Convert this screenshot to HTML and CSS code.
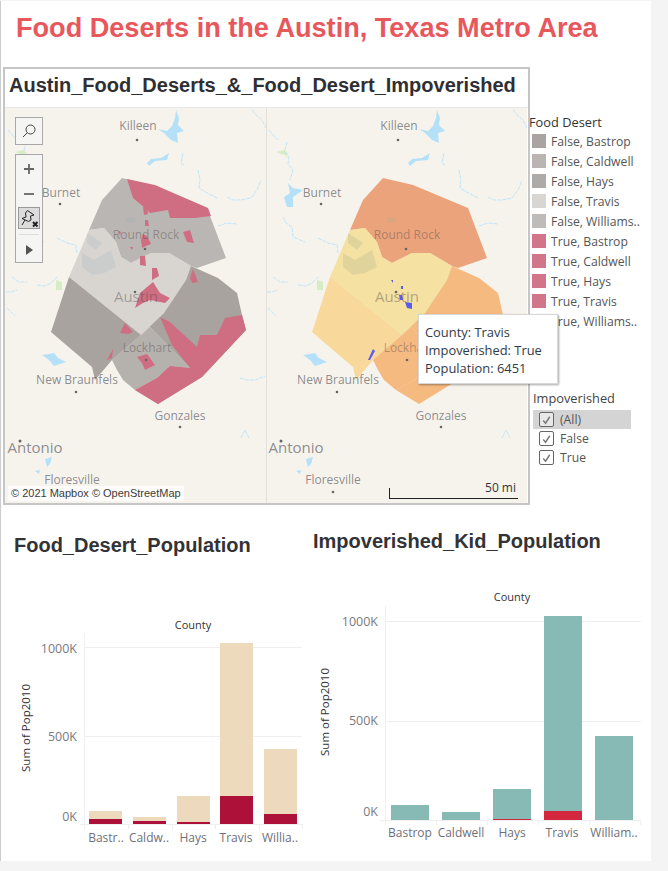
FILE: index.html
```html
<!DOCTYPE html>
<html lang="en">
<head>
<meta charset="utf-8">
<title>Food Deserts in the Austin, Texas Metro Area</title>
<link rel="stylesheet" href="styles.css">
</head>
<body>
<div class="dash">
  <h1 class="title">Food Deserts in the Austin, Texas Metro Area</h1>
  <div class="main">
    <section class="card">
      <h2 class="card-title">Austin_Food_Deserts_&amp;_Food_Desert_Impoverished</h2>
      <div class="maps">
        <div class="map">
          <svg class="map-svg" viewBox="0 0 261 395" width="261" height="395">
            <defs>
              <g id="water">
                <g class="lake">
                  <polygon points="22,75 27,80 37,82 27,89 27,99 21,99 18,89 24,85"/>
                  <polygon points="171,2 174,10 173,17 179,23 172,25 173,35 166,32 159,25 153,21 162,23 167,18 170,10"/>
                  <polygon points="142,55 146,51 156,50 164,45 162,52 150,53 144,58"/>
                  <polygon points="37,247 44,246 49,245 53,250 61,254 55,256 49,258 44,252"/>
                  <polygon points="40,351 47,349 45,356 42,359"/>
                  <polygon points="30,363 35,362 34,366"/>
                </g>
                <g class="river">
                  <polyline points="21,34 19,42 23,49 22,56 27,62 24,72"/>
                  <polyline points="17,109 20,115 26,119 27,129 39,134"/>
                  <polyline points="52,130 62,135 71,137 72,145"/>
                  <polyline points="222,89 228,92 236,92 246,90 252,82 256,72"/>
                  <polyline points="247,2 252,8 257,12 261,20"/>
                  <polyline points="7,169 14,174 22,174"/>
                  <polyline points="32,177 40,178 46,175 52,169"/>
                  <polyline points="1,184 6,184 12,182"/>
                  <polyline points="193,62 195,72 194,80 204,86 212,90"/>
                  <polyline points="178,45 176,55 180,58"/>
                  <polyline points="213,118 222,115 232,116"/>
                  <polyline points="235,270 242,272 250,272 260,268"/>
                  <polyline points="3,22 8,28 12,32"/>
                  <polyline points="236,330 240,322 244,330"/>
                  <polyline points="2,200 10,208"/>
                </g>
                <g class="park">
                  <polygon points="10,44 19,42 22,50 19,47"/>
                  <polygon points="51,172 57,174 57,182 51,182"/>
                </g>
              </g>
              <g id="labels" class="place">
                <text x="133" y="22">Killeen</text>
                <text x="56" y="89">Burnet</text>
                <text class="faded" x="141" y="131">Round Rock</text>
                <text class="big faded" x="131" y="194">Austin</text>
                <text class="faded" x="142" y="244">Lockhart</text>
                <text x="72" y="276">New Braunfels</text>
                <text x="175" y="312">Gonzales</text>
                <text class="big" x="30" y="345">Antonio</text>
                <text x="67" y="376">Floresville</text>
                <circle cx="132" cy="32" r="1.3"/><circle cx="55" cy="96" r="1.3"/>
                <circle cx="140" cy="141" r="1.3"/><circle cx="130" cy="184" r="1.3"/>
                <circle cx="141" cy="252" r="1.3"/><circle cx="71" cy="284" r="1.3"/>
                <circle cx="175" cy="319" r="1.3"/><circle cx="15" cy="333" r="1.5"/>
                <circle cx="67" cy="384" r="1.3"/>
              </g>
              <g id="shade">
                <polygon points="82,125 97,135 91,142 82,135"/>
                <polygon points="77,145 89,152 106,142 111,159 99,165 87,167 77,159"/>
                <polygon points="120,110 128,109 132,114 123,115"/>
              </g>
              <polygon id="wil" points="117,70 147,77 202,100 221,150 192,160 186,158 164,145 146,145 126,155 116,149 111,134 99,120 84,122 97,92"/>
              <polygon id="tra" points="84,122 99,120 111,134 116,149 126,155 146,145 164,145 186,158 181,172 159,205 136,227 64,169"/>
              <polygon id="hay" points="64,169 136,227 107,252 90,272 87,259 46,224"/>
              <polygon id="bas" points="186,158 213,170 232,185 237,207 241,222 197,269 153,296 130,282 152,270 165,258 185,260 145,219 136,227 159,205 181,172"/>
              <polygon id="cal" points="136,227 145,219 185,260 165,258 152,270 130,282 118,272 112,262 107,252"/>
            </defs>
            <use href="#water"/>
            <g class="county">
              <use href="#wil" class="g-wil"/>
              <use href="#tra" class="g-tra"/>
              <use href="#hay" class="g-hay"/>
              <use href="#bas" class="g-bas"/>
              <use href="#cal" class="g-cal"/>
            </g>
            <use href="#shade" class="shade-grey"/>
            <g class="desert">
              <polygon points="122,71 150,77 203,100 206,108 190,110 165,110 163,102 145,105 140,100 128,90"/>
              <polygon points="178,124 185,122 189,135 182,134"/>
              <polygon points="138,99 142,100 143,106 139,107"/>
              <polygon points="140,112 143,112 144,118 140,118"/>
              <polygon points="114,123 116,124 115,128"/>
              <polygon points="138,126 142,128 146,136 141,138 137,140 136,132"/>
              <polygon points="125,139 128,139 127,142"/>
              <polygon points="135,148 140,148 141,158 135,157"/>
              <polygon points="147,160 152,160 154,168 147,172"/>
              <polygon points="130,200 135,185 148,174 155,185 165,190 160,195 145,192 138,195"/>
              <polygon points="185,170 188,161 193,174 187,175"/>
              <polygon points="115,225 120,215 128,224 123,226"/>
              <polygon points="102,252 108,241 107,250"/>
              <polygon points="132,249 142,246 150,257 140,262 137,255"/>
              <polygon points="237,207 241,222 197,269 153,296 130,282 152,270 165,258 185,260 167,237 155,209 165,214 192,239 195,227 212,227 220,210"/>
            </g>
            <use href="#labels"/>
          </svg>
          <div class="attribution">© 2021 Mapbox © OpenStreetMap</div>
        </div>
        <div class="map map-right">
          <svg class="map-svg" viewBox="0 0 261 395" width="261" height="395">
            <use href="#water"/>
            <g class="county">
              <use href="#wil" class="o-wil"/>
              <use href="#tra" class="o-tra"/>
              <use href="#hay" class="o-hay"/>
              <use href="#bas" class="o-bas"/>
              <use href="#cal" class="o-cal"/>
            </g>
            <use href="#shade" class="shade-warm"/>
            <g class="impoverished">
              <polygon points="139,194 146,195 146,201 141,200"/>
              <polygon points="133,187 136,187 137,192 134,192"/>
              <polygon points="135,178 137,178 137,181 135,181"/>
              <polygon points="125,172 127,172 127,175"/>
              <polygon points="102,252 107,241 109,243 104,252"/>
            </g>
            <use href="#labels"/>
          </svg>
          <div class="scale">50 mi</div>
        </div>
        <div class="zoom-tools">
          <button class="tool-box search" type="button" aria-label="Search">
            <svg viewBox="0 0 16 16" width="16" height="16"><circle cx="9.500" cy="6.500" r="4.500"/><path d="M6.300 9.700 2 14"/></svg>
          </button>
          <div class="tool-box stack">
            <svg class="tool" viewBox="0 0 12 12" width="12" height="12"><path d="M6 1v10M1 6h10"/></svg>
            <svg class="tool" viewBox="0 0 12 12" width="12" height="12"><path d="M1 6h10"/></svg>
            <span class="pin-box">
              <svg viewBox="0 0 20 20" width="20" height="20"><path class="pin" d="M8.500 2.500 15 7l-3.500 1 .5 4-2.500 1.500L3 10.500l4-1.500-.5-4zM6 12l-3 5"/><path class="pin-x" d="M14 14l4.500 4.500M18.500 14 14 18.500"/></svg>
            </span>
            <span class="rule"></span>
            <span class="play"></span>
          </div>
        </div>
      </div>
    </section>
    <aside class="side">
      <div class="legend">
        <div class="legend-title">Food Desert</div>
        <ul class="legend-list">
          <li><i class="sw s1"></i>False, Bastrop</li>
          <li><i class="sw s2"></i>False, Caldwell</li>
          <li><i class="sw s3"></i>False, Hays</li>
          <li><i class="sw s4"></i>False, Travis</li>
          <li><i class="sw s5"></i>False, Williams..</li>
          <li><i class="sw s6"></i>True, Bastrop</li>
          <li><i class="sw s6"></i>True, Caldwell</li>
          <li><i class="sw s6"></i>True, Hays</li>
          <li><i class="sw s6"></i>True, Travis</li>
          <li><i class="sw s6"></i>True, Williams..</li>
        </ul>
      </div>
      <div class="filter">
        <div class="filter-title">Impoverished</div>
        <ul class="filter-list">
          <li class="on"><span class="check"><svg viewBox="0 0 14 14" width="14" height="14"><path d="M3.500 7.500 6 10.500l4.500-7"/></svg></span>(All)</li>
          <li><span class="check"><svg viewBox="0 0 14 14" width="14" height="14"><path d="M3.500 7.500 6 10.500l4.500-7"/></svg></span>False</li>
          <li><span class="check"><svg viewBox="0 0 14 14" width="14" height="14"><path d="M3.500 7.500 6 10.500l4.500-7"/></svg></span>True</li>
        </ul>
      </div>
    </aside>
    <div class="tooltip">
      <div>County: Travis</div>
      <div>Impoverished: True</div>
      <div>Population: 6451</div>
    </div>
  </div>
  <div class="charts">
    <section class="chart chart-a">
      <h2 class="chart-title">Food_Desert_Population</h2>
      <svg class="plot" viewBox="0 0 305 260" width="305" height="260">
        <text class="head" x="192" y="28">County</text>
        <g class="grid">
          <path d="M83.500 32v194M83 46.500h218M83 135.500h218M79 223.500h222"/>
          <path d="M127.500 223v5M171.500 223v5M214.500 223v5M258.500 223v5M301.500 223v5M83.500 223v5"/>
        </g>
        <g class="tan">
          <rect x="88" y="210" width="33" height="13"/><rect x="132" y="216" width="33" height="7"/>
          <rect x="176" y="195" width="33" height="28"/><rect x="219" y="42" width="33" height="181"/>
          <rect x="263" y="148" width="33" height="75"/>
        </g>
        <g class="crimson">
          <rect x="88" y="218" width="33" height="5"/><rect x="132" y="220" width="33" height="3"/>
          <rect x="176" y="221" width="33" height="2"/><rect x="219" y="195" width="33" height="28"/>
          <rect x="263" y="213" width="33" height="10"/>
        </g>
        <g class="val">
          <text x="76" y="52">1000K</text><text x="76" y="140">500K</text><text x="76" y="220">0K</text>
        </g>
        <g class="cat">
          <text x="105" y="241">Bastr..</text><text x="148" y="241">Caldw..</text><text x="192" y="241">Hays</text>
          <text x="235" y="241">Travis</text><text x="279" y="241">Willia..</text>
        </g>
        <text class="axis" transform="translate(29 127) rotate(-90)">Sum of Pop2010</text>
      </svg>
    </section>
    <section class="chart chart-b">
      <h2 class="chart-title">Impoverished_Kid_Population</h2>
      <svg class="plot" viewBox="0 0 346 280" width="346" height="280">
        <text class="head" x="206" y="20">County</text>
        <g class="grid">
          <path d="M79.500 25v219M79 40.500h256M79 140.500h256M74 239.500h261"/>
          <path d="M79.500 239v5M130.500 239v5M181.500 239v5M232.500 239v5M283.500 239v5M334.500 239v5"/>
        </g>
        <g class="teal">
          <rect x="85" y="224" width="38" height="15"/><rect x="136" y="231" width="38" height="8"/>
          <rect x="187" y="208" width="38" height="31"/><rect x="238" y="35" width="38" height="204"/>
          <rect x="289" y="155" width="38" height="84"/>
        </g>
        <g class="red">
          <rect x="187" y="238" width="38" height="1"/><rect x="238" y="230" width="38" height="9"/>
        </g>
        <g class="val">
          <text x="72" y="45">1000K</text><text x="72" y="144">500K</text><text x="72" y="235">0K</text>
        </g>
        <g class="cat">
          <text x="104" y="256">Bastrop</text><text x="155" y="256">Caldwell</text><text x="206" y="256">Hays</text>
          <text x="256" y="256">Travis</text><text x="308" y="256">William..</text>
        </g>
        <text class="axis" transform="translate(23 131) rotate(-90)">Sum of Pop2010</text>
      </svg>
    </section>
  </div>
</div>
</body>
</html>
```
FILE: styles.css
```css
* { box-sizing: border-box; }
html, body { margin: 0; padding: 0; }
body {
  background: #f4f4f4;
  font-family: "Liberation Sans", Arial, sans-serif;
  color: #333;
  height: 871px;
  overflow: hidden;
}
.dash {
  width: 651px;
  height: 860px;
  margin-top: 1px;
  background: #fff;
  border-left: 1px solid #ccc;
  display: flex;
  flex-direction: column;
}
.title {
  margin: 0;
  height: 66px;
  padding: 11px 0 0 15px;
  font-size: 27.100px;
  line-height: 32px;
  font-weight: 700;
  color: #e8575c;
}
.main {
  position: relative;
  display: flex;
  height: 438px;
  padding-left: 2px;
}
.card {
  width: 527px;
  height: 438px;
  border: 2px solid #c6c6c6;
  display: flex;
  flex-direction: column;
}
.card-title {
  margin: 0;
  height: 39px;
  padding: 3px 0 0 4px;
  font-size: 20px;
  line-height: 26px;
  font-weight: 700;
  color: #2f2f33;
  border-bottom: 1px solid #e6e6e6;
  white-space: nowrap;
}
.maps {
  position: relative;
  display: flex;
  height: 395px;
}
.map {
  position: relative;
  width: 261px;
  height: 395px;
  background: #f6f3ed;
  overflow: hidden;
}
.map-right { box-shadow: inset 1px 0 0 #e2e0dc; }
.map-svg { display: block; }
.lake polygon { fill: #b5e1f8; }
.river polyline { fill: none; stroke: #bfe5f9; stroke-width: 1; stroke-dasharray: 4 1; }
.park polygon { fill: #d5ecc4; }
.place text {
  font-family: "Open Sans", sans-serif;
  font-size: 12px;
  text-anchor: middle;
  fill: rgba(80, 80, 88, .65);
}
.place text.big { font-size: 15px; }
.place text.faded { fill: rgba(80, 70, 70, .42); }
.place circle { fill: #666; }
.county { fill-opacity: .8; }
.g-wil { fill: #aba6a4; }
.g-tra { fill: #d1cdc9; }
.g-hay { fill: #958e8b; }
.g-bas { fill: #958e8b; }
.g-cal { fill: #a5a09c; }
.desert polygon { fill: #cf6e82; }
.o-wil { fill: #e88e5e; }
.o-tra { fill: #f5dc8d; }
.o-hay { fill: #f9d186; }
.o-bas { fill: #f5ab64; }
.o-cal { fill: #f5ab64; }
.shade-grey { fill: #8fa9b5; fill-opacity: .18; }
.shade-warm { fill: #a3b08e; fill-opacity: .25; }
.impoverished polygon { fill: #5a5cf0; }
.attribution {
  position: absolute;
  left: 3px;
  bottom: 2px;
  padding: 1px 3px;
  background: rgba(255, 255, 255, .75);
  font-size: 11px;
  line-height: 13px;
  color: #3c3c3c;
  white-space: nowrap;
}
.scale {
  position: absolute;
  left: 123px;
  top: 380px;
  width: 129px;
  height: 11px;
  border-left: 1px solid #222;
  border-bottom: 1px solid #222;
  font-family: "Open Sans", sans-serif;
  font-size: 12px;
  line-height: 0;
  text-align: right;
  padding-right: 2px;
  color: #333;
}
.zoom-tools {
  position: absolute;
  left: 10px;
  top: 9px;
  display: flex;
  flex-direction: column;
  gap: 9px;
}
.tool-box {
  width: 28px;
  padding: 0;
  background: #f5f5f4;
  border: 1px solid #a8a8a8;
  display: flex;
  align-items: center;
}
.search { height: 28px; justify-content: center; }
.search svg { fill: none; stroke: #444; stroke-width: 1; }
.stack { height: 109px; flex-direction: column; padding-top: 8px; }
.tool { fill: none; stroke: #666; stroke-width: 1.800; margin-bottom: 13px; }
.pin-box {
  width: 22px;
  height: 22px;
  margin-top: -6px;
  border: 1px solid #999;
  background: #dcdcdc;
  display: flex;
  align-items: center;
  justify-content: center;
}
.pin { fill: none; stroke: #222; stroke-width: 1; }
.pin-x { fill: none; stroke: #222; stroke-width: 2; }
.rule { width: 20px; height: 1px; background: #ddd; margin-top: 5px; flex: none; }
.play {
  width: 0;
  height: 0;
  margin-top: 10px;
  border-style: solid;
  border-width: 5px 0 5px 7px;
  border-color: transparent transparent transparent #555;
}
.side {
  flex: 1;
  font-family: "Open Sans", sans-serif;
  font-size: 12.200px;
  color: #555;
}
.legend { padding-top: 46px; }
.legend-title { font-size: 12.800px; line-height: 18px; color: #333; margin-left: -1px; }
.legend-list, .filter-list { list-style: none; margin: 0; padding: 0; }
.legend-list li {
  display: flex;
  align-items: center;
  height: 20px;
  padding-left: 2px;
  white-space: nowrap;
}
.sw { width: 14px; height: 14px; margin-right: 5px; flex: none; }
.s1 { background: #a9a4a1; }
.s2 { background: #bab5b2; }
.s3 { background: #aeaaa7; }
.s4 { background: #d9d5d2; }
.s5 { background: #bfbbb8; }
.s6 { background: #d0758a; }
.filter { margin-top: 58px; padding-left: 3px; }
.filter-title { font-size: 12.800px; line-height: 18px; color: #444; }
.filter-list { width: 98px; margin-top: 3px; }
.filter-list li {
  display: flex;
  align-items: center;
  height: 19px;
  padding-left: 6px;
}
.filter-list li.on { background: #d4d4d4; }
.check {
  width: 15px;
  height: 15px;
  margin-right: 6px;
  border: 1px solid #666;
  border-radius: 2px;
  background: #fff;
  display: flex;
  align-items: center;
  justify-content: center;
}
.filter-list li.on .check { background: #e8e8e8; }
.check svg { fill: none; stroke: #777; stroke-width: 1.500; }
.tooltip {
  position: absolute;
  left: 417px;
  top: 247px;
  width: 140px;
  height: 70px;
  padding: 8px 0 0 6px;
  background: #fff;
  border: 1px solid #d8d8d8;
  box-shadow: 1px 1px 2px rgba(0, 0, 0, .35);
  font-family: "Open Sans", sans-serif;
  font-size: 12.900px;
  line-height: 18px;
  color: #2f3a4a;
  white-space: nowrap;
}
.charts { display: flex; flex: 1; }
.chart { position: relative; }
.chart-a { width: 305px; }
.chart-b { width: 345px; }
.chart-title {
  margin: 0;
  font-size: 20px;
  line-height: 24px;
  font-weight: 700;
  color: #333337;
  white-space: nowrap;
}
.chart-a .chart-title { padding: 28px 0 0 13px; height: 96px; }
.chart-b .chart-title { padding: 24px 0 0 7px; height: 76px; }
.plot { display: block; }
.plot text { font-family: "Open Sans", sans-serif; }
.head { font-size: 11px; text-anchor: middle; fill: #333; }
.grid path { fill: none; stroke: #efefef; stroke-width: 1; }
.tan rect { fill: #edd9bc; }
.crimson rect { fill: #ad1038; }
.teal rect { fill: #87bab4; }
.red rect { fill: #d3273e; }
.val text { font-size: 12.500px; text-anchor: end; fill: #7a7a80; }
.cat text { font-size: 12px; text-anchor: middle; fill: #6f6f78; }
.axis { font-size: 11.500px; text-anchor: middle; fill: #333; }
```
